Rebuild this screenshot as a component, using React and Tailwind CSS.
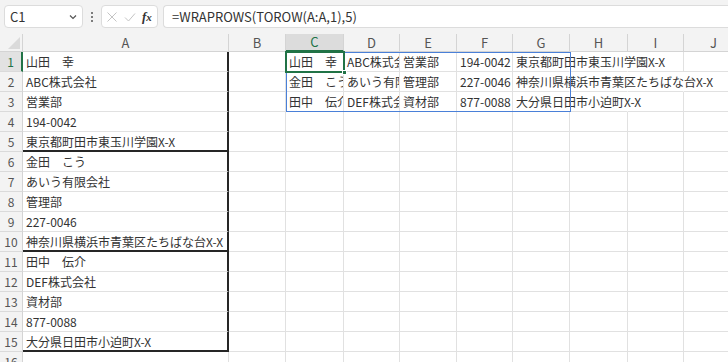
import { useState } from 'react'

const COLS = [
  { id: 'A', w: 206 },
  { id: 'B', w: 57 },
  { id: 'C', w: 58 },
  { id: 'D', w: 56 },
  { id: 'E', w: 57 },
  { id: 'F', w: 56 },
  { id: 'G', w: 57 },
  { id: 'H', w: 58 },
  { id: 'I', w: 56 },
  { id: 'J', w: 60 },
]

const colA = [
  '山田　幸', 'ABC株式会社', '営業部', '194-0042', '東京都町田市東玉川学園X-X',
  '金田　こう', 'あいう有限会社', '管理部', '227-0046', '神奈川県横浜市青葉区たちばな台X-X',
  '田中　伝介', 'DEF株式会社', '資材部', '877-0088', '大分県日田市小迫町X-X',
]

// spilled result of WRAPROWS, 3 rows x 5 cols starting at C1
const spill = [0, 1, 2].map(r => colA.slice(r * 5, r * 5 + 5))

function Cell({ w, children, overflow, className = '' }) {
  return (
    <div
      className={`relative h-full shrink-0 border-r border-b border-[#e1e1e1] text-[12px] ${overflow ? 'overflow-visible z-10' : 'overflow-hidden'} ${className}`}
      style={{ width: w }}
    >
      {children != null && (
        <span className="absolute left-[3px] top-[1px] whitespace-nowrap bg-white leading-[17px]">{children}</span>
      )}
    </div>
  )
}

function Row({ n }) {
  const active = n === 1
  const thickBottom = n === 5 || n === 10 || n === 15
  const s = n <= 3 ? spill[n - 1] : null
  return (
    <div className="flex h-[20px]">
      <div
        className={`flex h-full w-[23px] shrink-0 items-center justify-center border-b border-[#dadada] text-[12px] ${active ? 'border-r-2 border-r-[#217346] bg-[#e2e2e2] text-[#217346]' : 'border-r border-r-[#d4d4d4] bg-[#f3f3f3] text-[#555]'}`}
      >
        {n}
      </div>
      <Cell
        w={COLS[0].w}
        className={`${n <= 15 ? 'border-r-2 border-r-[#262626]' : ''} ${thickBottom ? 'border-b-2 border-b-[#262626]' : ''}`}
      >
        {n <= 15 ? colA[n - 1] : null}
      </Cell>
      <Cell w={COLS[1].w} />
      <Cell w={COLS[2].w}>{s ? s[0] : null}</Cell>
      <Cell w={COLS[3].w}>{s ? s[1] : null}</Cell>
      <Cell w={COLS[4].w}>{s ? s[2] : null}</Cell>
      <Cell w={COLS[5].w}>{s ? s[3] : null}</Cell>
      <Cell w={COLS[6].w} overflow={!!s} className={s ? 'border-r-transparent' : ''}>
        {s ? s[4] : null}
      </Cell>
      <Cell w={COLS[7].w} className={s ? 'border-r-transparent' : ''} />
      <Cell w={COLS[8].w} className={n === 2 ? 'border-r-transparent' : ''} />
      <Cell w={COLS[9].w} />
    </div>
  )
}

export default function App() {
  const [sel] = useState('C1')
  return (
    <div
      className="h-[362px] w-[728px] overflow-hidden bg-white text-[#333]"
      style={{ fontFamily: '"Noto Sans CJK JP", "Noto Sans", sans-serif' }}
    >
      {/* formula bar */}
      <div className="flex h-[34px] items-start bg-[#f3f3f3] pt-[5px]">
        <div className="ml-[4px] flex h-[23px] w-[79px] items-center justify-between rounded-[4px] border border-[#dcdcdc] bg-white pl-[5px] pr-[4px] text-[13px] text-[#333]">
          <span>{sel}</span>
          <svg width="10" height="10" viewBox="0 0 10 10" fill="none" stroke="#555" strokeWidth="1.2">
            <path d="M2 3.5 L5 6.5 L8 3.5" />
          </svg>
        </div>
        <div className="flex h-[23px] w-[18px] flex-col items-center justify-center gap-[2px]">
          <span className="h-[2px] w-[2px] rounded-full bg-[#555]" />
          <span className="h-[2px] w-[2px] rounded-full bg-[#555]" />
          <span className="h-[2px] w-[2px] rounded-full bg-[#555]" />
        </div>
        <div className="flex h-[23px] w-[57px] items-center gap-[6px] rounded-[4px] border border-[#dcdcdc] bg-white pl-[4px]">
          <svg width="12" height="12" viewBox="0 0 12 12" stroke="#c4c4c4" strokeWidth="1">
            <path d="M1.5 1.5 L10.5 10.5 M10.5 1.5 L1.5 10.5" />
          </svg>
          <svg width="12" height="12" viewBox="0 0 12 12" fill="none" stroke="#c4c4c4" strokeWidth="1">
            <path d="M1 6.5 L4.5 10 L11 2.5" />
          </svg>
          <span className="text-[13px] italic font-bold text-[#333]" style={{ fontFamily: '"Liberation Serif", serif' }}>
            f<span className="text-[11px]">x</span>
          </span>
        </div>
        <div className="ml-[5px] flex h-[23px] flex-1 items-center rounded-l-[4px] border border-r-0 border-[#dcdcdc] bg-white pl-[8px] text-[13px] text-[#333]">
          =WRAPROWS(TOROW(A:A,1),5)
        </div>
      </div>

      {/* sheet */}
      <div className="relative">
        <div className="flex h-[18px] bg-[#f3f3f3]">
          <div className="relative h-full w-[23px] shrink-0 border-r border-b border-[#d4d4d4]">
            <svg className="absolute bottom-[2px] right-[2px]" width="12" height="12" viewBox="0 0 12 12">
              <path d="M12 0 L12 12 L0 12 Z" fill="#dadada" />
            </svg>
          </div>
          {COLS.map(c => (
            <div
              key={c.id}
              className={`flex h-full shrink-0 items-center justify-center border-r border-[#d4d4d4] text-[13px] ${c.id === 'C' ? 'border-b-2 border-b-[#217346] bg-[#dcdcdc] text-[#217346]' : 'border-b text-[#555]'}`}
              style={{ width: c.w }}
            >
              {c.id}
            </div>
          ))}
        </div>

        {Array.from({ length: 16 }, (_, i) => (
          <Row key={i} n={i + 1} />
        ))}

        {/* spill range */}
        <div className="pointer-events-none absolute left-[286px] top-[18px] z-20 h-[60px] w-[285px] border border-[#4a80d8]" />
        {/* active cell */}
        <div className="pointer-events-none absolute left-[285px] top-[17px] z-30 h-[22px] w-[60px] border-2 border-[#217346]">
          <span className="absolute -bottom-[4px] -right-[4px] h-[5px] w-[5px] border border-white bg-[#217346]" />
        </div>
      </div>
    </div>
  )
}
